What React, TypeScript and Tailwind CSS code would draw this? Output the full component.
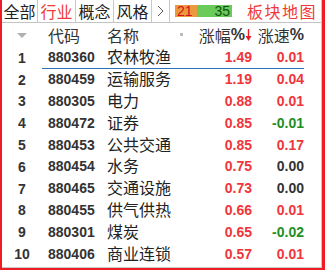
import React from "react";

const rows = [
  { code: "880360", name: "农林牧渔", chg: "1.49", spd: "0.01" },
  { code: "880459", name: "运输服务", chg: "1.19", spd: "0.04" },
  { code: "880305", name: "电力", chg: "0.88", spd: "0.01" },
  { code: "880472", name: "证券", chg: "0.85", spd: "-0.01" },
  { code: "880453", name: "公共交通", chg: "0.85", spd: "0.17" },
  { code: "880454", name: "水务", chg: "0.75", spd: "0.00" },
  { code: "880465", name: "交通设施", chg: "0.73", spd: "0.00" },
  { code: "880455", name: "供气供热", chg: "0.66", spd: "0.01" },
  { code: "880301", name: "煤炭", chg: "0.65", spd: "-0.02" },
  { code: "880406", name: "商业连锁", chg: "0.57", spd: "0.01" },
];

const cjk = "font-['Noto_Sans_CJK_SC',sans-serif]";
const num = "font-['Liberation_Sans',Arial,sans-serif] font-bold text-[14px] leading-[16px]";

const spdColor = (v: string) => {
  if (v.startsWith("-")) return "text-[#1f8f24]";
  if (v === "0.00") return "text-[#333333]";
  return "text-[#f0353b]";
};

const tabs = ["全部", "行业", "概念", "风格"];

export default function App() {
  return (
    <div className="w-[325px] h-[270px] bg-white border-l-2 border-r-[3px] border-b-2 border-[#ee1c25] overflow-hidden">
      <div className="h-full flex flex-col border-r border-b border-[#c8c8c8]">
        {/* tab bar */}
        <div className={`h-[23px] shrink-0 flex items-stretch border-b border-[#c4c4c4] text-[16px] leading-none ${cjk}`}>
          {tabs.map((t, i) => (
            <div
              key={t}
              className={`flex items-center justify-center pb-[1px] border-r border-[#c8c8c8] ${
                i === 0 ? "w-[36px]" : "w-[38px]"
              } ${i === 1 ? "text-[#f03a3a]" : "text-[#222]"}`}
            >
              {t}
            </div>
          ))}
          <div className="w-[18px] flex items-center justify-center border-r border-[#c8c8c8]">
            <svg width="7" height="12" viewBox="0 0 7 12">
              <path d="M1 1 L6 6 L1 11" fill="none" stroke="#555" strokeWidth="1" />
            </svg>
          </div>
          <div className="ml-[5px] my-[5px] w-[57px] flex text-[14px] font-['Liberation_Sans',Arial,sans-serif]">
            <div className="w-[22px] bg-[#ea9a3c] text-[#d4101c] flex items-center pl-[2px]">21</div>
            <div className="flex-1 bg-[#6acb5a] text-[#145214] flex items-center justify-end pr-[2px]">35</div>
          </div>
          <div className="ml-[15px] pb-[1px] flex items-center text-[#f03a3a] text-[16px] tracking-[1.5px]">板块地图</div>
        </div>

        {/* header */}
        <div className={`h-[24px] shrink-0 flex items-center text-[#333] text-[16px] leading-none ${cjk}`}>
          <div className="w-[40px] flex justify-center">
            <svg width="10" height="5" viewBox="0 0 10 5">
              <path d="M0 0 H10 L5 5 Z" fill="#b0b0b0" />
            </svg>
          </div>
          <div className="flex-1 flex items-center pr-[17px] pb-[1px]">
            <div className="w-[65px] pl-[6px]">代码</div>
            <div className="flex-1 flex items-center justify-between pr-[9px]">
              <span>名称</span>
              <span className="w-[3px] h-[3px] bg-[#bbbbbb]" />
            </div>
            <div className="w-[60px] flex items-center justify-end">
              <span>涨幅</span>
              <span className="font-['Liberation_Sans',Arial,sans-serif] font-bold">%</span>
              <svg width="7" height="12" viewBox="0 0 7 12">
                <path d="M3.5 0 V10" stroke="#ee1c25" strokeWidth="1.4" />
                <path d="M0.5 7 L3.5 12 L6.5 7 Z" fill="#ee1c25" />
              </svg>
            </div>
            <div className="w-[52px] flex items-center justify-end">
              <span>涨速</span>
              <span className="font-['Liberation_Sans',Arial,sans-serif] font-bold">%</span>
            </div>
          </div>
        </div>

        {/* rows */}
        {rows.map((r, i) => (
          <div key={r.code} className="h-[21.8px] shrink-0 flex items-stretch">
            <div className={`w-[40px] flex items-center justify-center text-[#333] ${num}`}>{i + 1}</div>
            <div
              className={`flex-1 mr-[17px] flex items-center border-b ${
                i === 0 ? "border-[#2a72b5]" : "border-transparent"
              }`}
            >
              <div className={`w-[65px] pl-[6px] text-[#333] ${num}`}>{r.code}</div>
              <div className={`flex-1 pb-[2px] text-[16px] leading-[16px] text-[#222] ${cjk}`}>{r.name}</div>
              <div className={`w-[58px] text-right text-[#f0353b] ${num}`}>{r.chg}</div>
              <div className={`w-[52px] text-right ${spdColor(r.spd)} ${num}`}>{r.spd}</div>
            </div>
          </div>
        ))}
      </div>
    </div>
  );
}
